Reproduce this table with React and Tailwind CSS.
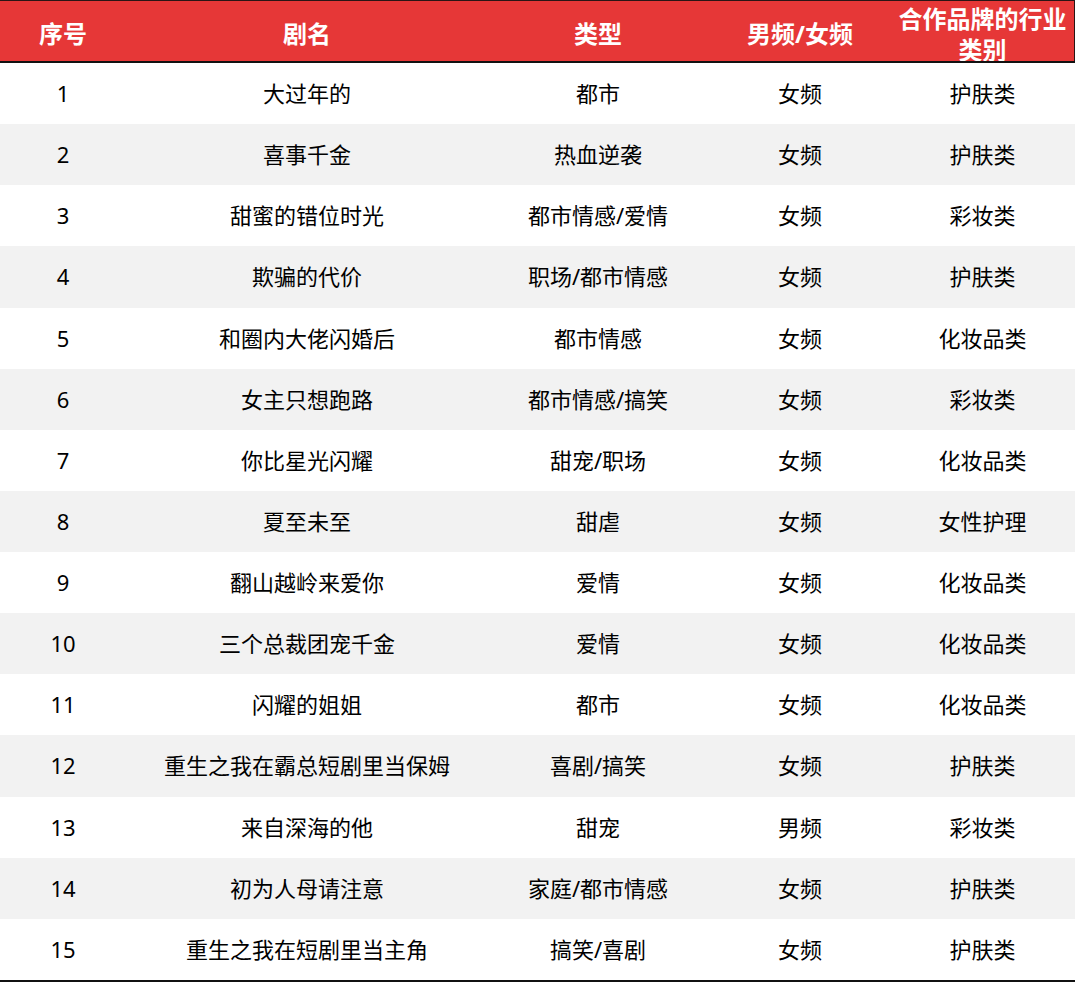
import React from "react";

const rows = [
  ["1", "大过年的", "都市", "女频", "护肤类"],
  ["2", "喜事千金", "热血逆袭", "女频", "护肤类"],
  ["3", "甜蜜的错位时光", "都市情感/爱情", "女频", "彩妆类"],
  ["4", "欺骗的代价", "职场/都市情感", "女频", "护肤类"],
  ["5", "和圈内大佬闪婚后", "都市情感", "女频", "化妆品类"],
  ["6", "女主只想跑路", "都市情感/搞笑", "女频", "彩妆类"],
  ["7", "你比星光闪耀", "甜宠/职场", "女频", "化妆品类"],
  ["8", "夏至未至", "甜虐", "女频", "女性护理"],
  ["9", "翻山越岭来爱你", "爱情", "女频", "化妆品类"],
  ["10", "三个总裁团宠千金", "爱情", "女频", "化妆品类"],
  ["11", "闪耀的姐姐", "都市", "女频", "化妆品类"],
  ["12", "重生之我在霸总短剧里当保姆", "喜剧/搞笑", "女频", "护肤类"],
  ["13", "来自深海的他", "甜宠", "男频", "彩妆类"],
  ["14", "初为人母请注意", "家庭/都市情感", "女频", "护肤类"],
  ["15", "重生之我在短剧里当主角", "搞笑/喜剧", "女频", "护肤类"],
];

const cols = "grid grid-cols-[126px_362px_220px_184px_181px]";
const font = { fontFamily: '"Noto Sans", "Noto Sans CJK SC", sans-serif' };

export default function App() {
  return (
    <div className="w-[1075px] h-[984px] bg-white text-black" style={font}>
      <div className={`${cols} h-[61px] bg-[#e63737] border-t border-r border-[#2a1515] text-white font-bold text-[24px] leading-[31px] w-[1075px]`}>
        {["序号", "剧名", "类型", "男频/女频"].map((h) => (
          <div key={h} className="flex items-center justify-center pt-[4px]">{h}</div>
        ))}
        <div className="flex flex-col items-center justify-start overflow-hidden pt-[2px] h-[60px]">
          <div>合作品牌的行业</div>
          <div>类别</div>
        </div>
      </div>
      <div className="h-[2px] bg-[#111]" />
      {rows.map((r, i) => (
        <div
          key={r[0]}
          className={`${cols} h-[61.13px] text-[22px] ${i % 2 === 1 ? "bg-[#f2f2f2]" : "bg-white"}`}
        >
          {r.map((c, j) => (
            <div key={j} className="flex items-center justify-center whitespace-nowrap">{c}</div>
          ))}
        </div>
      ))}
      <div className="h-[2px] bg-[#111]" />
    </div>
  );
}
